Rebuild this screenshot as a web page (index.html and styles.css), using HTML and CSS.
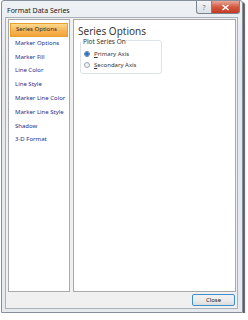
FILE: index.html
```html
<!DOCTYPE html>
<html lang="en">
<head>
  <meta charset="UTF-8" />
  <meta name="viewport" content="width=device-width, initial-scale=1.0" />
  <title>Format Data Series</title>
  <link rel="stylesheet" href="styles.css">
</head>
<body>
  <div class="window">
    <div class="titlebar">
      <span class="title">Format Data Series</span>
      <div class="caption-buttons">
        <span class="btn-help">?</span>
        <span class="btn-close">
          <svg width="9" height="7" viewBox="0 0 9 7"><path d="M1.5 1 L7.5 6 M7.5 1 L1.5 6" stroke="#fff" stroke-width="1.6"/></svg>
        </span>
      </div>
    </div>
    <div class="client">
      <div class="main">
        <ul class="nav">
          <li class="selected">Series Options</li>
          <li>Marker Options</li>
          <li>Marker Fill</li>
          <li>Line Color</li>
          <li>Line Style</li>
          <li>Marker Line Color</li>
          <li>Marker Line Style</li>
          <li>Shadow</li>
          <li>3-D Format</li>
        </ul>
        <div class="pane">
          <h2>Series Options</h2>
          <div class="group">
            <div class="group-label">Plot Series On</div>
            <label class="radio"><span class="dot checked"></span><u>P</u>rimary Axis</label>
            <label class="radio"><span class="dot"></span><u>S</u>econdary Axis</label>
          </div>
        </div>
      </div>
      <div class="footer">
        <button class="close">Close</button>
      </div>
    </div>
  </div>
</body>
</html>
```

FILE: styles.css
```css
body {
  margin: 0;
  background: #fff;
  font-family: "Noto Sans", "Liberation Sans", sans-serif;
}
.window {
  margin: 0 0 0 1px;
  width: 240px;
  height: 311px;
  border: 1px solid #868f99;
  border-radius: 3px 3px 0 0;
  background: linear-gradient(#eef1f4, #e3e8ed 60px, #e6eaee);
  box-shadow: 2px 2px 1px rgba(40, 40, 40, 0.75);
  display: flex;
  flex-direction: column;
}
.titlebar {
  height: 16px;
  display: flex;
  align-items: flex-start;
  justify-content: space-between;
}
.title {
  font-size: 7px;
  color: #1a1a1a;
  margin: 5px 0 0 5px;
}
.caption-buttons {
  display: flex;
  margin-right: 2px;
}
.btn-help,
.btn-close {
  height: 12px;
  border: 1px solid #7a848f;
  border-top: 0;
  display: flex;
  align-items: center;
  justify-content: center;
}
.btn-help {
  width: 14px;
  font-size: 7px;
  color: #6b7785;
  background: linear-gradient(#f3f5f8, #dbe0e6);
  border-radius: 0 0 0 3px;
}
.btn-close {
  width: 27px;
  border-left: 0;
  background: linear-gradient(#eaa99c, #d4583f 50%, #c23c22);
  border-radius: 0 0 3px 0;
}
.client {
  flex: 1;
  margin: 0 4px 3px 3px;
  border: 1px solid #a9b2bb;
  background: #f0f0f0;
  display: flex;
  flex-direction: column;
  padding: 1px 0 0 2px;
}
.main {
  flex: 1;
  display: flex;
  gap: 3px;
}
.nav {
  list-style: none;
  margin: 0;
  padding: 3px 1px 0;
  width: 58px;
  background: #fff;
  border: 1px solid #a8a8a8;
}
.nav li {
  height: 13.8px;
  line-height: 13.8px;
  font-size: 6px;
  color: #1d2f8a;
  padding-left: 5px;
  box-sizing: border-box;
}
.nav li.selected {
  color: #2c2c2c;
  background: linear-gradient(#fbd990, #f6b454 55%, #f4a43a);
  border: 1px solid #e8a030;
  line-height: 11.8px;
}
.pane {
  flex: 1;
  margin-right: 1px;
  background: #fff;
  border: 1px solid #a8a8a8;
  padding: 4px 0 0 4px;
}
.pane h2 {
  margin: 0;
  font-size: 10px;
  font-weight: normal;
  color: #3a3a3a;
}
.group {
  width: 80px;
  margin: 2px 0 0 2px;
  border: 1px solid #dde3ea;
  border-radius: 3px;
  padding-bottom: 3px;
}
.group-label {
  font-size: 6.5px;
  color: #333;
  padding-left: 2px;
  margin: -4px 0 2px 0;
  background: #fff;
  width: fit-content;
}
.radio {
  display: flex;
  align-items: center;
  height: 11px;
  font-size: 6px;
  color: #333;
  padding-left: 3px;
}
.dot {
  width: 6px;
  height: 6px;
  border-radius: 50%;
  border: 1px solid #9aa3ad;
  background: linear-gradient(#e9ecef, #fafafa);
  margin-right: 4px;
  box-sizing: border-box;
}
.dot.checked {
  background: radial-gradient(circle, #1b5da8 0, #3c86d0 1.6px, #dde6ef 2.2px);
  border-color: #5b7fa6;
}
.footer {
  height: 16px;
  display: flex;
  justify-content: flex-end;
  align-items: center;
  padding-right: 2px;
}
.close {
  width: 43px;
  height: 12px;
  padding: 0;
  font-family: inherit;
  font-size: 6px;
  color: #222;
  border: 1px solid #3c8fcf;
  border-radius: 2px;
  background: linear-gradient(#f2f2f2, #ebebeb 50%, #dddddd);
}
```
